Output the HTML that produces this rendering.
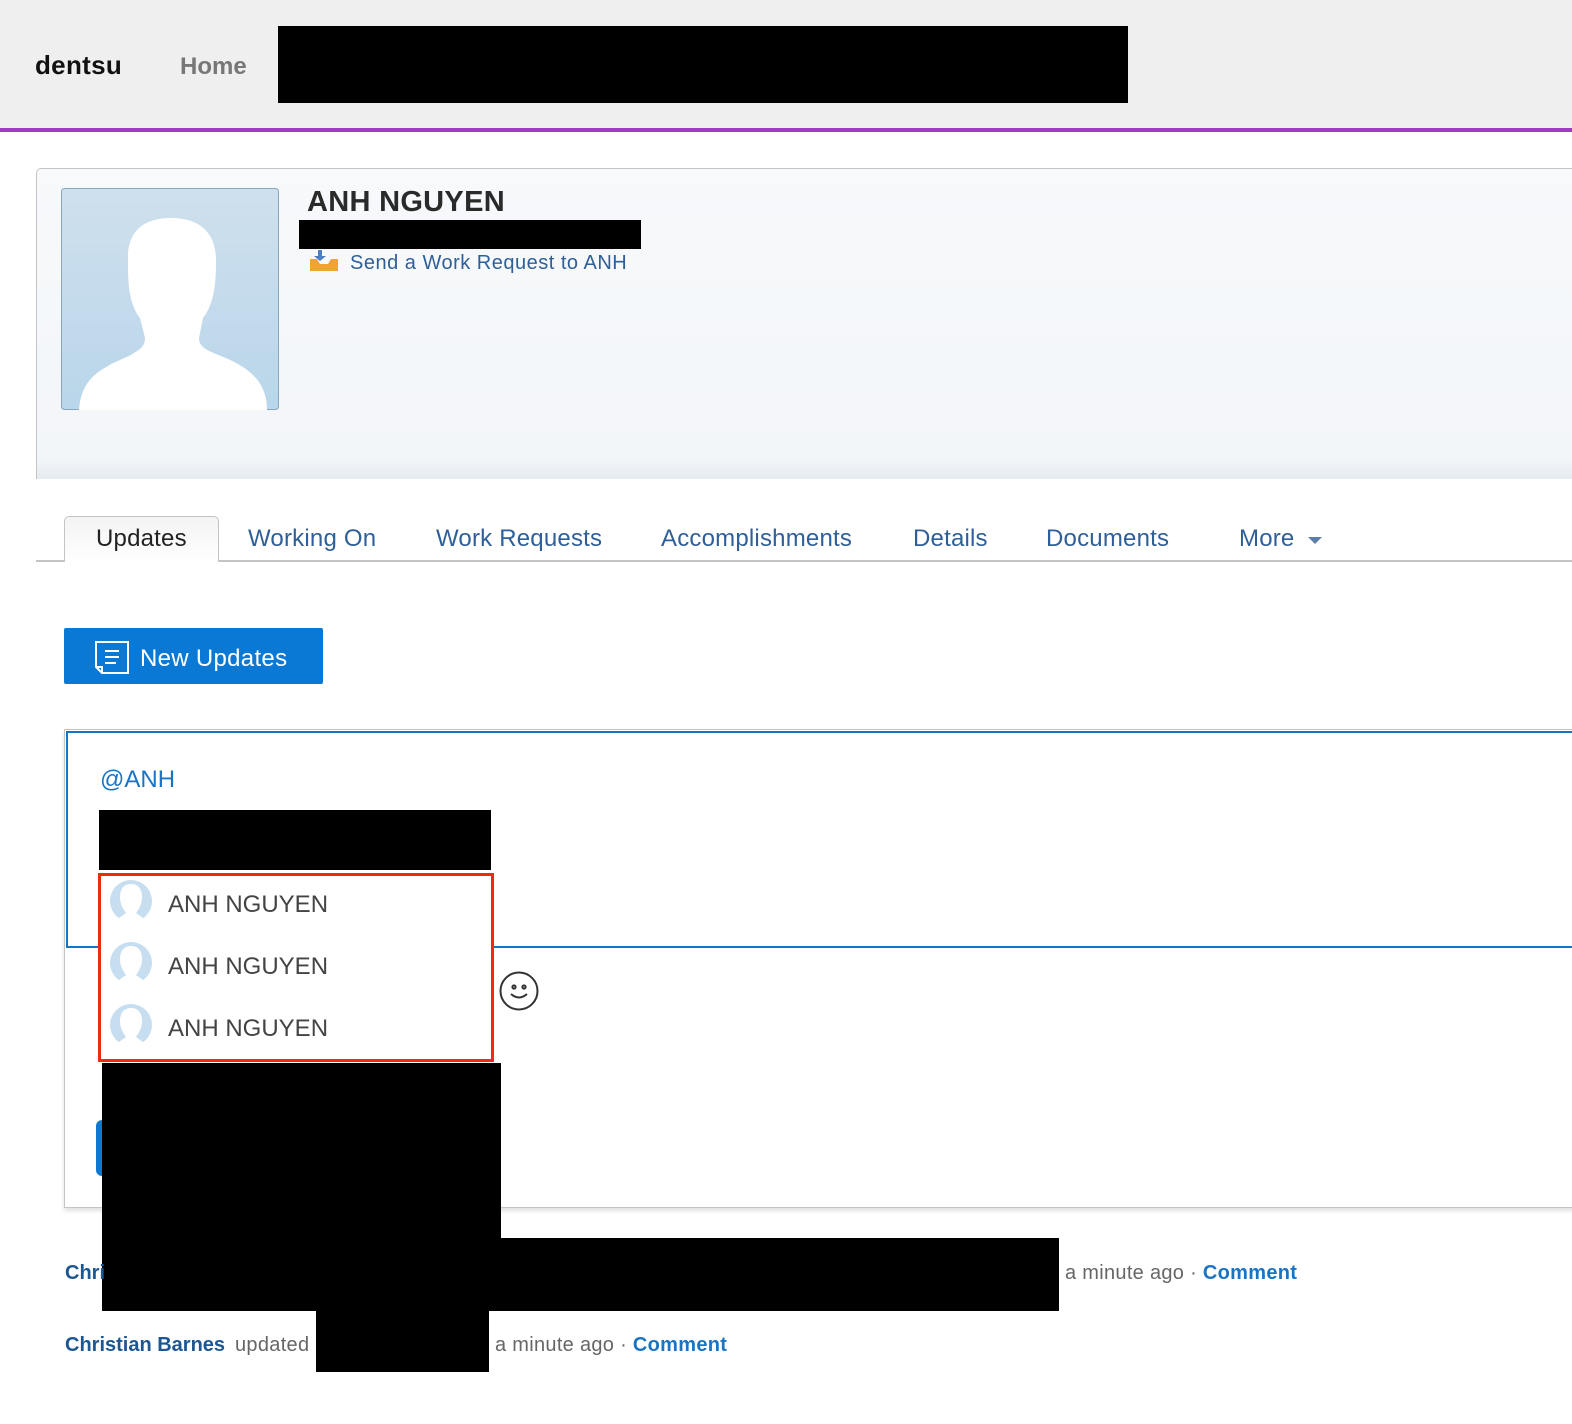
<!DOCTYPE html>
<html><head><meta charset="utf-8"><style>
*{margin:0;padding:0;box-sizing:border-box}
body{width:1572px;height:1424px;background:#fff;position:relative;overflow:hidden;font-family:"Liberation Sans",sans-serif}
.a{position:absolute}
.blk{position:absolute;background:#000}
.tab{position:absolute;top:525px;font-size:24px;color:#2f5f99;white-space:nowrap;letter-spacing:0.2px}
.nm{position:absolute;left:168px;font-size:24px;color:#444;white-space:nowrap}
</style></head><body>
<div class="a" style="left:0;top:0;width:1572px;height:128px;background:#efefef"></div>
<div class="a" style="left:0;top:128px;width:1572px;height:4px;background:#9b3dc4"></div>
<div class="a" style="left:35px;top:50px;font-size:26px;font-weight:bold;color:#111;letter-spacing:0.3px">dentsu</div>
<div class="a" style="left:180px;top:53px;font-size:24px;font-weight:bold;color:#777">Home</div>
<div class="blk" style="left:278px;top:26px;width:850px;height:77px"></div>

<div class="a" style="left:36px;top:168px;width:1600px;height:311px;background:linear-gradient(#f7f9fb 0,#f3f6f9 290px,#e3eaf1 311px);border:1.5px solid #c4c4c4;border-bottom:none;border-radius:5px 0 0 0"></div>
<svg class="a" style="left:61px;top:188px" width="218" height="222" viewBox="0 0 218 222">
<defs><linearGradient id="g" x1="0" y1="0" x2="0" y2="1"><stop offset="0" stop-color="#cfe0ed"/><stop offset="1" stop-color="#b9d6ea"/></linearGradient></defs>
<rect x="0.5" y="0.5" width="217" height="221" rx="3" fill="url(#g)" stroke="#88a6bd"/>
<path d="M110 30 C78 30 66 48 67 72 C67 92 67 115 79 130 L84 150 C84 160 76 163 68 168 C40 180 20 190 18 222 L206 222 C206 195 190 180 160 168 C148 163 138 160 138 150 L142 130 C154 115 155 92 155 72 C155 48 142 30 110 30Z" fill="#fff"/>
</svg>
<div class="a" style="left:307px;top:186px;font-size:29px;font-weight:bold;color:#2a2a2a;letter-spacing:0.3px">ANH NGUYEN</div>
<div class="blk" style="left:299px;top:220px;width:342px;height:29px"></div>
<svg class="a" style="left:309px;top:250px" width="30" height="22" viewBox="0 0 30 22"><path d="M9 0 L13 0 L13 6 L17 6 L11 11 L5 6 L9 6Z" fill="#4a7fc0"/><path d="M1 9 H8 L11 14 H19 L22 9 H29 V21 H1Z" fill="#f0a52c"/></svg>
<div class="a" style="left:350px;top:252px;font-size:20px;color:#2f5f99;letter-spacing:0.5px">Send a Work Request to ANH</div>

<div class="a" style="left:36px;top:560px;width:1540px;height:2px;background:#c4c4c4"></div>
<div class="a" style="left:64px;top:516px;width:155px;height:46px;background:linear-gradient(#f3f3f3,#fff);border:1.5px solid #c4c4c4;border-bottom:none;border-radius:5px 5px 0 0"></div>
<div class="tab" style="left:96px;color:#222">Updates</div>
<div class="tab" style="left:248px">Working On</div>
<div class="tab" style="left:436px">Work Requests</div>
<div class="tab" style="left:661px">Accomplishments</div>
<div class="tab" style="left:913px">Details</div>
<div class="tab" style="left:1046px">Documents</div>
<div class="tab" style="left:1239px">More</div>
<div class="a" style="left:1308px;top:537px;border-left:7px solid transparent;border-right:7px solid transparent;border-top:7px solid #5b7fa8"></div>

<div class="a" style="left:64px;top:628px;width:259px;height:56px;background:#0a79d6;border-radius:2px"></div>
<svg class="a" style="left:94px;top:640px" width="36" height="36" viewBox="0 0 36 36" fill="none" stroke="#fff" stroke-width="2"><path d="M3 2 H34 V33 H8 L2 27 V2Z"/><path d="M2 27 H8 V33"/><path d="M11 11 H25 M11 17 H25 M11 23 H22"/></svg>
<div class="a" style="left:140px;top:645px;font-size:24px;color:#fff;letter-spacing:0.3px">New Updates</div>

<div class="a" style="left:64px;top:729px;width:1560px;height:479px;border:1.5px solid #c4c4c4;box-shadow:0 3px 4px rgba(0,0,0,.12)"></div>
<div class="a" style="left:66px;top:731px;width:1560px;height:217px;border:2px solid #1a74c4;border-right:none"></div>
<div class="a" style="left:100px;top:766px;font-size:24px;color:#1a74c4">@ANH</div>
<div class="blk" style="left:99px;top:810px;width:392px;height:60px"></div>
<div class="a" style="left:96px;top:1120px;width:20px;height:56px;background:#0a79d6;border-radius:6px 0 0 6px"></div>

<div class="a" style="left:98px;top:873px;width:396px;height:189px;background:#fff;border:3px solid #ef2b0f"></div>
<svg class="a" style="left:108px;top:880px" width="46" height="42" viewBox="0 0 46 42"><circle cx="23" cy="21" r="21" fill="#c6def0"/><path d="M23 4 C15 4 12 10 12 17 C12 25 16 30 18 33 C14 36 10 38 8 42 L38 42 C36 38 32 36 28 33 C30 30 34 25 34 17 C34 10 31 4 23 4Z" fill="#fff"/></svg>
<svg class="a" style="left:108px;top:942px" width="46" height="42" viewBox="0 0 46 42"><circle cx="23" cy="21" r="21" fill="#c6def0"/><path d="M23 4 C15 4 12 10 12 17 C12 25 16 30 18 33 C14 36 10 38 8 42 L38 42 C36 38 32 36 28 33 C30 30 34 25 34 17 C34 10 31 4 23 4Z" fill="#fff"/></svg>
<svg class="a" style="left:108px;top:1004px" width="46" height="42" viewBox="0 0 46 42"><circle cx="23" cy="21" r="21" fill="#c6def0"/><path d="M23 4 C15 4 12 10 12 17 C12 25 16 30 18 33 C14 36 10 38 8 42 L38 42 C36 38 32 36 28 33 C30 30 34 25 34 17 C34 10 31 4 23 4Z" fill="#fff"/></svg>
<div class="nm" style="top:891px">ANH NGUYEN</div>
<div class="nm" style="top:953px">ANH NGUYEN</div>
<div class="nm" style="top:1015px">ANH NGUYEN</div>
<svg class="a" style="left:498px;top:970px" width="42" height="42" viewBox="0 0 42 42" fill="none" stroke="#333" stroke-width="2"><circle cx="21" cy="21" r="18.5"/><circle cx="16" cy="17" r="1.6"/><circle cx="26" cy="17" r="1.6"/><path d="M13 24 Q21 31 29 24"/></svg>

<div class="blk" style="left:102px;top:1063px;width:399px;height:248px"></div>
<div class="blk" style="left:499px;top:1238px;width:560px;height:73px"></div>
<div class="blk" style="left:316px;top:1309px;width:173px;height:63px"></div>
<div class="a" style="left:65px;top:1262px;font-size:20px;font-weight:bold;color:#1d5691">Chri</div>
<div class="a" style="left:1065px;top:1262px;font-size:20px;color:#666;white-space:nowrap;letter-spacing:0.3px">a minute ago · <b style="color:#1a74c4">Comment</b></div>
<div class="a" style="left:65px;top:1334px;font-size:20px;font-weight:bold;color:#1d5691;white-space:nowrap">Christian Barnes</div>
<div class="a" style="left:235px;top:1334px;font-size:20px;color:#666;letter-spacing:0.3px">updated</div>
<div class="a" style="left:495px;top:1334px;font-size:20px;color:#666;white-space:nowrap;letter-spacing:0.3px">a minute ago · <b style="color:#1a74c4">Comment</b></div>
</body></html>
